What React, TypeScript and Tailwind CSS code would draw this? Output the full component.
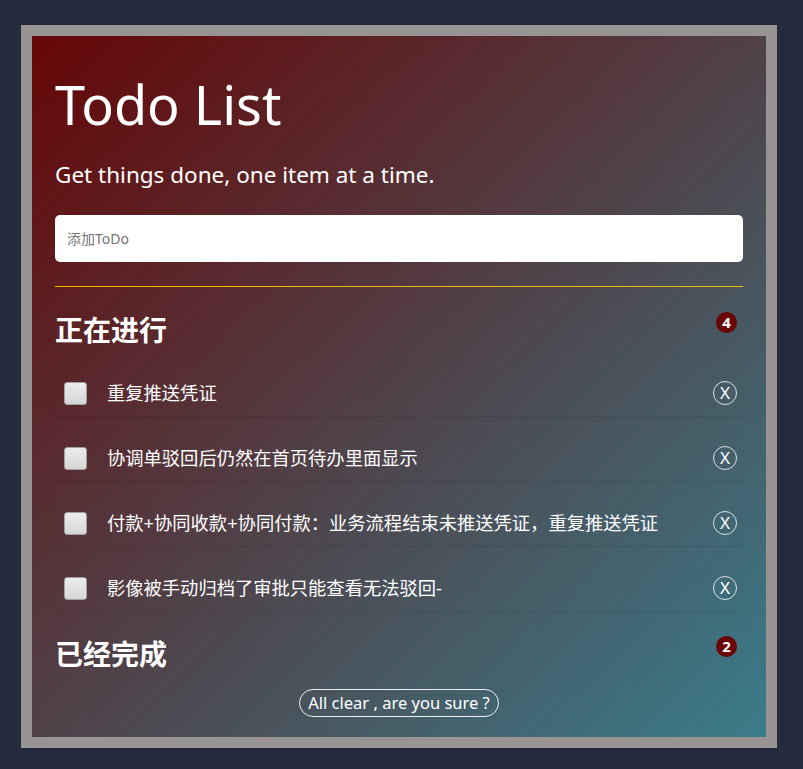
import React, { useState } from 'react';

interface Todo {
    id: number;
    title: string;
    done: boolean;
}

const INITIAL_TODOS: Todo[] = [
    { id: 1, title: '重复推送凭证', done: false },
    { id: 2, title: '协调单驳回后仍然在首页待办里面显示', done: false },
    { id: 3, title: '付款+协同收款+协同付款：业务流程结束未推送凭证，重复推送凭证', done: false },
    { id: 4, title: '影像被手动归档了审批只能查看无法驳回-', done: false },
    { id: 5, title: '附件上传失败', done: true },
    { id: 6, title: '流程图显示异常', done: true },
];

const FONT = { fontFamily: '"Noto Sans", "Noto Sans CJK SC", sans-serif' };

const SectionHeader: React.FC<{ title: string; count: number }> = ({ title, count }) => (
    <div className="flex items-start justify-between h-[40px]">
        <h2 className="text-[28px] leading-[40px] font-bold text-white">{title}</h2>
        <span className="mt-[2px] mr-[6px] w-[21px] h-[21px] rounded-full bg-[#6a0606] text-white text-[15px] font-bold leading-[21px] text-center">
            {count}
        </span>
    </div>
);

const App: React.FC = () => {
    const [todos, setTodos] = useState<Todo[]>(INITIAL_TODOS);
    const [input, setInput] = useState('');

    const pending = todos.filter(t => !t.done);
    const finished = todos.filter(t => t.done);

    const toggle = (id: number) => setTodos(todos.map(t => (t.id === id ? { ...t, done: !t.done } : t)));
    const remove = (id: number) => setTodos(todos.filter(t => t.id !== id));

    const handleKey = (e: React.KeyboardEvent<HTMLInputElement>) => {
        if (e.key === 'Enter' && input.trim()) {
            setTodos([...todos, { id: Date.now(), title: input.trim(), done: false }]);
            setInput('');
        }
    };

    return (
        <div className="min-h-screen bg-[#232b3c] pt-[25px] pl-[21px] pr-[26px] pb-[21px]" style={FONT}>
            <div className="h-[723px] border-[11px] border-[#989494] bg-[linear-gradient(to_bottom_right,#660606,#3a7c8a)] px-[23px] text-white">
                <h1 className="mt-[36px] text-[54px] leading-[64px]">Todo List</h1>
                <p className="mt-[24px] text-[22.5px] leading-[30px]">Get things done, one item at a time.</p>

                <input
                    type="text"
                    placeholder="添加ToDo"
                    value={input}
                    onChange={(e) => setInput(e.target.value)}
                    onKeyDown={handleKey}
                    className="mt-[25px] block w-full h-[47px] rounded-[5px] bg-white px-[12px] text-[14px] text-gray-800 placeholder:text-[#757575] outline-none"
                />

                <div className="mt-[24px] h-px bg-[#f2b705]" />

                <div className="mt-[23px]">
                    <SectionHeader title="正在进行" count={pending.length} />
                </div>

                <ul className="mt-[13px] flex flex-col gap-[12px]">
                    {pending.map((todo) => (
                        <li
                            key={todo.id}
                            className="h-[53px] flex items-center pt-[7px] pl-[9px] pr-[6px] rounded-[4px] shadow-[0_1px_1px_rgba(0,0,0,0.08)]"
                        >
                            <button
                                onClick={() => toggle(todo.id)}
                                className="w-[23px] h-[23px] shrink-0 rounded-[3px] border border-[#a0a0a0] bg-linear-to-b from-[#ececec] to-[#d6d6d6]"
                            />
                            <span className="ml-[20px] flex-1 text-[18.3px] leading-[26px]">{todo.title}</span>
                            <button
                                onClick={() => remove(todo.id)}
                                className="w-[24px] h-[24px] shrink-0 rounded-full border border-white/80 text-[17px] leading-[22px] text-center"
                            >
                                X
                            </button>
                        </li>
                    ))}
                </ul>

                <div className="mt-[23px]">
                    <SectionHeader title="已经完成" count={finished.length} />
                </div>

                <div className="mt-[15px] flex justify-center">
                    <button
                        onClick={() => setTodos(pending)}
                        className="h-[28px] px-[8px] rounded-full border border-white/90 text-[16.5px] leading-[26px]"
                    >
                        All clear , are you sure ?
                    </button>
                </div>
            </div>
        </div>
    );
};

export default App;
